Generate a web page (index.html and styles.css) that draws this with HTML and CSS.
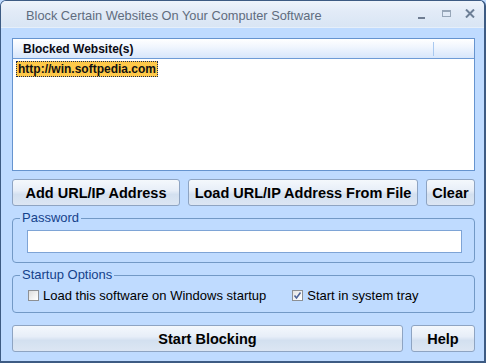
FILE: index.html
```
<!DOCTYPE html>
<html>
<head>
<meta charset="utf-8">
<link rel="stylesheet" href="styles.css">
</head>
<body>
<div class="window">
  <div class="titlebar">
    <span class="title">Block Certain Websites On Your Computer Software</span>
    <div class="controls">
      <svg class="ctl-min" width="7" height="10" viewBox="0 0 7 10"><rect x="0" y="7" width="7" height="2" fill="#6f7d92"/></svg>
      <svg class="ctl-max" width="9" height="8" viewBox="0 0 9 8"><rect x="0.5" y="0.5" width="8" height="6" fill="none" stroke="#97a6b8"/><rect x="0" y="0" width="9" height="2" fill="#97a6b8"/></svg>
      <svg class="ctl-close" width="10" height="9" viewBox="0 0 10 9"><path d="M1 0.5 L9 8.5 M9 0.5 L1 8.5" stroke="#6d7f96" stroke-width="2" fill="none"/></svg>
    </div>
  </div>
  <div class="client">
    <div class="listbox">
      <div class="lb-header">
        <span class="lb-col">Blocked Website(s)</span>
        <span class="lb-divider"></span>
      </div>
      <div class="lb-body">
        <span class="lb-item">http://win.softpedia.com</span>
      </div>
    </div>
    <div class="btn-row">
      <button class="btn btn-add">Add URL/IP Address</button>
      <button class="btn btn-load">Load URL/IP Address From File</button>
      <button class="btn btn-clear">Clear</button>
    </div>
    <div class="group group-pw">
      <span class="group-label">Password</span>
      <div class="textbox"></div>
    </div>
    <div class="group group-startup">
      <span class="group-label">Startup Options</span>
      <div class="check-row">
        <span class="check">
          <span class="box"></span>
          <span class="check-text">Load this software on Windows startup</span>
        </span>
        <span class="check check-2">
          <span class="box checked"><svg width="9" height="9" viewBox="0 0 9 9"><path d="M1.5 4.5 L3.5 7 L7.5 1.5" stroke="#4d6499" stroke-width="1.6" fill="none"/></svg></span>
          <span class="check-text">Start in system tray</span>
        </span>
      </div>
    </div>
    <div class="btn-row btn-row-bottom">
      <button class="btn btn-start">Start Blocking</button>
      <button class="btn btn-help">Help</button>
    </div>
  </div>
</div>
</body>
</html>
```

FILE: styles.css
```
* { box-sizing: border-box; }
html, body {
  margin: 0;
  padding: 0;
  width: 486px;
  height: 363px;
  overflow: hidden;
  background: #bfdbff;
  font-family: "Liberation Sans", Arial, sans-serif;
}
.window {
  width: 486px;
  height: 363px;
  border: 1px solid #3d5b83;
  border-right-width: 2px;
  border-bottom-width: 2px;
  border-radius: 6px 6px 0 0;
  background: #bfdbff;
  display: flex;
  flex-direction: column;
  overflow: hidden;
}
.titlebar {
  height: 27px;
  flex: none;
  display: flex;
  align-items: center;
  padding-left: 25px;
  padding-right: 9px;
  background: linear-gradient(#eef4fb 0%, #e2ebf7 40%, #d9e5f4 100%);
  border-bottom: 1px solid #e6effa;
}
.title {
  flex: 1;
  font-size: 12.8px;
  color: #606c7e;
  padding-top: 2px;
  white-space: nowrap;
}
.controls {
  display: flex;
  align-items: center;
}
.ctl-min { margin-right: 17px; margin-top: 1px; }
.ctl-max { margin-right: 14px; margin-top: -1px; }
.ctl-close { margin-top: -1px; }

.client {
  flex: 1;
  display: flex;
  flex-direction: column;
  padding: 10px 9px 0 11px;
}
.listbox {
  height: 133px;
  flex: none;
  background: #fff;
  border: 1px solid #6694cf;
  display: flex;
  flex-direction: column;
}
.lb-header {
  height: 20px;
  flex: none;
  display: flex;
  align-items: center;
  background: linear-gradient(#ffffff 0%, #f1f6fe 40%, #d7e6fb 100%);
  border-bottom: 1px solid #6e9bd6;
  position: relative;
}
.lb-col {
  width: 420px;
  padding-left: 10px;
  font-size: 12px;
  font-weight: bold;
  color: #0a0a14;
}
.lb-divider {
  width: 1px;
  height: 14px;
  background: #a9c9f0;
}
.lb-body {
  padding: 0 0 0 3px;
}
.lb-item {
  display: inline-block;
  height: 16px;
  line-height: 14px;
  padding: 0 1px 0 1px;
  background: #fec94a;
  border: 1px dotted #1a2a55;
  font-size: 12px;
  font-weight: bold;
  color: #111;
}

.btn-row {
  display: flex;
  gap: 8px;
  margin-top: 8px;
  flex: none;
}
.btn {
  height: 27px;
  margin: 0;
  padding: 0;
  border: 1px solid #8ea4c2;
  border-radius: 3px;
  background: linear-gradient(#f4f8fc 0%, #e7eef8 42%, #d3e0f0 58%, #dce6f3 100%);
  font-family: "Liberation Sans", Arial, sans-serif;
  font-size: 14.5px;
  font-weight: bold;
  color: #000;
  white-space: nowrap;
}
.btn-add { width: 168px; }
.btn-load { width: 230px; }
.btn-clear { flex: 1; }

.group {
  position: relative;
  flex: none;
  border: 1px solid #7299c6;
  border-radius: 4px;
  margin-top: 12px;
}
.group-label {
  position: absolute;
  top: -9px;
  left: 7px;
  padding: 0 2px;
  background: #bfdbff;
  font-size: 13px;
  line-height: 15px;
  color: #15428b;
}
.group-pw {
  height: 45px;
  padding: 11px 12px 0 14px;
}
.textbox {
  height: 23px;
  background: #fff;
  border: 1px solid #7ea4d6;
}
.group-startup {
  height: 38px;
  padding: 12px 0 0 15px;
}
.check-row {
  display: flex;
  align-items: center;
  height: 15px;
}
.check {
  display: flex;
  align-items: center;
  gap: 4px;
  font-size: 13px;
  color: #000;
}
.check-2 { margin-left: 26px; }
.box {
  width: 11px;
  height: 11px;
  border: 1px solid #8d9094;
  background: linear-gradient(135deg, #dcdcdc 0%, #f2f2f2 60%, #ffffff 100%);
  display: flex;
  align-items: center;
  justify-content: center;
}
.box.checked {
  background: linear-gradient(135deg, #e2e2e2 0%, #f6f6f6 60%, #ffffff 100%);
}
.btn-row-bottom {
  margin-top: 12px;
}
.btn-start { width: 391px; }
.btn-help { flex: 1; }
```
